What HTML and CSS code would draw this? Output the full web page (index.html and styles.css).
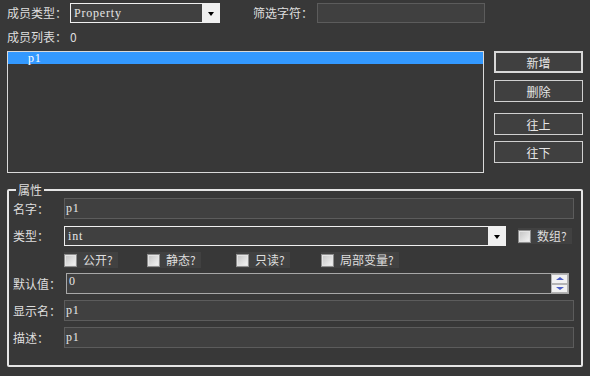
FILE: index.html
```html
<!DOCTYPE html>
<html lang="zh-CN">
<head>
    <meta charset="UTF-8">
    <title>成员编辑</title>
    <link rel="stylesheet" href="styles.css">
</head>
<body>
    <div class="dialog">
        <!-- Member type + filter -->
        <div class="row-top">
            <span class="lbl lbl-type">成员类型：</span>
            <div class="combo combo-type">
                <span class="combo-text mono">Property</span>
                <span class="combo-btn"><i class="arrow"></i></span>
            </div>
            <span class="lbl lbl-filter">筛选字符：</span>
            <div class="field field-filter"></div>
        </div>

        <div class="row-count">
            <span class="lbl lbl-type">成员列表：</span>
            <span class="count">0</span>
        </div>

        <!-- Member list and actions -->
        <div class="members">
            <div class="list">
                <div class="list-item selected mono">p1</div>
            </div>
            <div class="actions">
                <button class="btn btn-default">新增</button>
                <button class="btn btn-del">删除</button>
                <button class="btn btn-up">往上</button>
                <button class="btn btn-down">往下</button>
            </div>
        </div>

        <!-- Properties group -->
        <fieldset class="props">
            <legend>属性</legend>

            <div class="prop-row r-name">
                <span class="prop-label">名字：</span>
                <div class="field field-wide"><span class="field-text mono">p1</span></div>
            </div>

            <div class="prop-row r-type">
                <span class="prop-label">类型：</span>
                <div class="combo combo-kind">
                    <span class="combo-text mono">int</span>
                    <span class="combo-btn"><i class="arrow"></i></span>
                </div>
                <label class="check check-array"><i class="box"></i>数组?</label>
            </div>

            <div class="prop-row r-flags">
                <label class="check check-public"><i class="box"></i>公开?</label>
                <label class="check check-static"><i class="box"></i>静态?</label>
                <label class="check check-readonly"><i class="box"></i>只读?</label>
                <label class="check check-local"><i class="box"></i>局部变量?</label>
            </div>

            <div class="prop-row r-default">
                <span class="prop-label label-default">默认值：</span>
                <div class="field field-spin">
                    <span class="field-text mono">0</span>
                    <div class="spin">
                        <span class="spin-btn spin-up"><i class="tri-up"></i></span>
                        <span class="spin-btn spin-down"><i class="tri-down"></i></span>
                    </div>
                </div>
            </div>

            <div class="prop-row r-display">
                <span class="prop-label">显示名：</span>
                <div class="field field-wide"><span class="field-text mono">p1</span></div>
            </div>

            <div class="prop-row r-desc">
                <span class="prop-label">描述：</span>
                <div class="field field-wide"><span class="field-text mono">p1</span></div>
            </div>
        </fieldset>
    </div>
</body>
</html>
```

FILE: styles.css
```css
/* Dark dialog */
body, html {
    margin: 0;
    padding: 0;
    width: 590px;
    height: 376px;
    overflow: hidden;
    background-color: #383838;
    color: #dedede;
    font-family: "Noto Sans CJK SC", "Noto Sans", sans-serif;
    font-size: 12px;
}

.dialog {
    width: 576px;
    padding: 3px 7px 0;
}

/* Field text in the old serif system font */
.mono {
    font-family: "Liberation Serif", serif;
    font-size: 12px;
    letter-spacing: 0.8px;
    color: #e6e6e6;
}

.lbl {
    line-height: 14px;
}

/* Top row */
.row-top {
    display: flex;
    align-items: center;
    height: 20px;
}

.lbl-type {
    width: 63px;
}

.lbl-filter {
    width: 64px;
    margin-left: 33px;
}

.combo {
    display: flex;
    box-sizing: border-box;
    border: 1px solid #f0f0f0;
    background-color: #404040;
    height: 20px;
}

.combo-type {
    width: 150px;
}

.combo-text {
    flex: 1;
    padding-left: 3px;
    line-height: 18px;
}

.combo-btn {
    width: 17px;
    background-color: #f0f0f0;
    display: flex;
    align-items: center;
    justify-content: center;
}

.arrow {
    width: 0;
    height: 0;
    border-left: 3.5px solid transparent;
    border-right: 3.5px solid transparent;
    border-top: 4px solid #000000;
    margin-top: 1px;
}

.field {
    box-sizing: border-box;
    border: 1px solid #5c5c5c;
    background-color: #404040;
    height: 21px;
}

.field-filter {
    width: 168px;
    height: 20px;
}

.field-text {
    display: block;
    padding-left: 1px;
    line-height: 19px;
}

/* Count row */
.row-count {
    display: flex;
    margin-top: 7px;
    height: 14px;
    line-height: 14px;
}

/* Member list */
.members {
    display: flex;
    margin-top: 7px;
}

.list {
    width: 477px;
    height: 122px;
    box-sizing: border-box;
    border: 1px solid #dadada;
}

.list-item {
    height: 12px;
    line-height: 12px;
    padding-left: 20px;
}

.list-item.selected {
    background-color: #3399ff;
    color: #ffffff;
}

.actions {
    display: flex;
    flex-direction: column;
    width: 89px;
    margin-left: 10px;
}

.btn {
    height: 22px;
    padding: 0;
    box-sizing: border-box;
    border: 1px solid #d0d0d0;
    background-color: #404040;
    color: #e6e6e6;
    font-family: inherit;
    font-size: 12px;
}

.btn-default {
    border: 2px solid #d8d8d8;
}

.btn-del {
    margin-top: 7px;
}

.btn-up {
    margin-top: 11px;
}

.btn-down {
    margin-top: 6px;
}

/* Properties group */
.props {
    width: 576px;
    box-sizing: border-box;
    min-width: 0;
    margin: 10px 0 0;
    padding: 0 7px 17px 4px;
    border: 2px solid #e6e6e6;
    border-radius: 2px;
}

.props legend {
    margin-left: 3px;
    padding: 0 2px;
    line-height: 14px;
}

.prop-row {
    display: flex;
    align-items: center;
}

.prop-label {
    width: 51px;
    line-height: 14px;
}

.label-default {
    width: 53px;
}

.field-wide {
    flex: 1;
}

.r-name {
    margin-top: 1px;
}

.r-type {
    margin-top: 7px;
    height: 20px;
}

.combo-kind {
    width: 442px;
}

.combo-kind .combo-text {
    padding-left: 3px;
}

.r-flags {
    margin-top: 6px;
    height: 16px;
    padding-left: 51px;
}

.r-default {
    margin-top: 5px;
}

.r-display,
.r-desc {
    margin-top: 6px;
}

/* Checkboxes */
.check {
    display: flex;
    align-items: center;
    height: 16px;
    background-color: #414141;
    color: #dedede;
    line-height: 14px;
}

.box {
    width: 11px;
    height: 11px;
    margin-right: 6px;
    border: 1px solid #8e8e8e;
    background: linear-gradient(135deg, #c2c2c2, #f6f6f6);
    box-shadow: inset 0 0 0 1px #e4e4e4;
}

.check-array {
    width: 54px;
    margin-left: 12px;
}

.check-public,
.check-static,
.check-readonly {
    width: 54px;
}

.check-static {
    margin-left: 29px;
}

.check-readonly {
    margin-left: 35px;
}

.check-local {
    width: 78px;
    margin-left: 31px;
}

/* Spin field */
.field-spin {
    position: relative;
    width: 503px;
    border-color: #a8a8a8;
}

.field-spin .field-text {
    line-height: 14px;
    padding-left: 2px;
}

.spin {
    position: absolute;
    top: 0;
    right: 0;
    width: 17px;
    height: 19px;
    display: flex;
    flex-direction: column;
}

.spin-btn {
    flex: 1;
    display: flex;
    align-items: center;
    justify-content: center;
    background-color: #f2f2f2;
    border: 1px solid #b4b4b4;
}

.tri-up,
.tri-down {
    width: 0;
    height: 0;
    border-left: 4px solid transparent;
    border-right: 4px solid transparent;
}

.tri-up {
    border-bottom: 3px solid #4d5fc4;
}

.tri-down {
    border-top: 3px solid #4d5fc4;
}
```
